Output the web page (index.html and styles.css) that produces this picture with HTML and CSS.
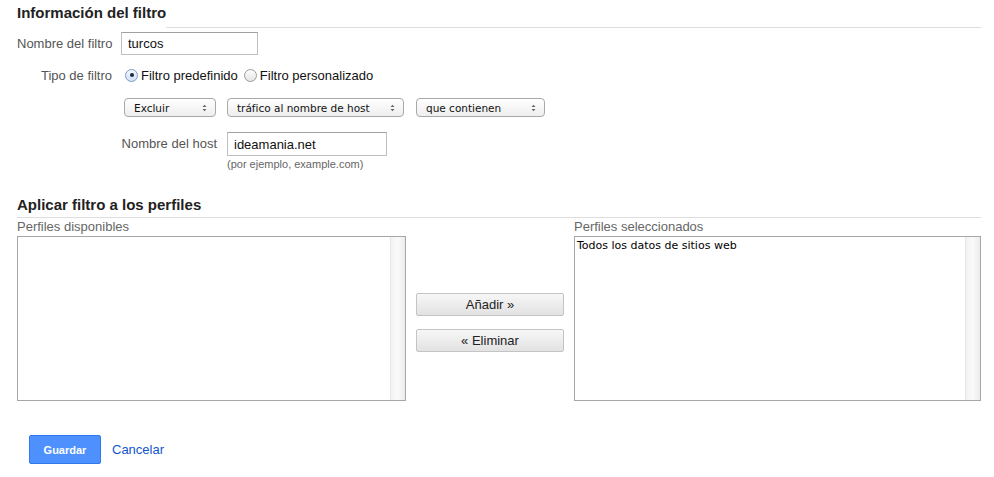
FILE: index.html
```html
<!DOCTYPE html>
<html lang="es">
<head>
<meta charset="utf-8">
<title>Filtro</title>
<link rel="stylesheet" href="styles.css">
</head>
<body>
<div class="page">
  <div class="head head-first"><h2>Información del filtro</h2><span class="head-line"></span></div>

  <div class="row row-name">
    <label class="label">Nombre del filtro</label>
    <div class="input input-name">turcos</div>
  </div>

  <div class="row row-type">
    <span class="label">Tipo de filtro</span>
    <span class="radio checked"></span><span class="radio-text">Filtro predefinido</span>
    <span class="radio"></span><span class="radio-text">Filtro personalizado</span>
  </div>

  <div class="row row-selects">
    <div class="select sel-1"><span>Excluir</span><svg class="arrows" width="5" height="8" viewBox="0 0 5 8"><path d="M0.5 3 L2.5 0.8 L4.5 3 Z M0.5 5 L2.5 7.2 L4.5 5 Z" fill="#666"/></svg></div>
    <div class="select sel-2"><span>tráfico al nombre de host</span><svg class="arrows" width="5" height="8" viewBox="0 0 5 8"><path d="M0.5 3 L2.5 0.8 L4.5 3 Z M0.5 5 L2.5 7.2 L4.5 5 Z" fill="#666"/></svg></div>
    <div class="select sel-3"><span>que contienen</span><svg class="arrows" width="5" height="8" viewBox="0 0 5 8"><path d="M0.5 3 L2.5 0.8 L4.5 3 Z M0.5 5 L2.5 7.2 L4.5 5 Z" fill="#666"/></svg></div>
  </div>

  <div class="row row-host">
    <span class="host-label">Nombre del host</span>
    <div class="host-field">
      <div class="input input-host">ideamania.net</div>
      <div class="hint">(por ejemplo, example.com)</div>
    </div>
  </div>

  <div class="head head-second"><h2>Aplicar filtro a los perfiles</h2></div>

  <div class="profiles">
    <div class="col col-left">
      <div class="col-title">Perfiles disponibles</div>
      <div class="listbox"><div class="list-items"></div><div class="scroll"></div></div>
    </div>
    <div class="col-mid">
      <button class="btn">Añadir »</button>
      <button class="btn">« Eliminar</button>
    </div>
    <div class="col col-right">
      <div class="col-title">Perfiles seleccionados</div>
      <div class="listbox"><div class="list-items"><div class="item">Todos los datos de sitios web</div></div><div class="scroll"></div></div>
    </div>
  </div>

  <div class="actions">
    <button class="btn-primary">Guardar</button>
    <a class="cancel" href="#">Cancelar</a>
  </div>
</div>
</body>
</html>
```

FILE: styles.css
```css
* { box-sizing: border-box; }
html, body { margin: 0; padding: 0; background: #fff; }
body { font-family: "Liberation Sans", Arial, sans-serif; font-size: 13px; color: #222; }

.page { width: 981px; padding: 0 0 0 17px; }

.head { display: flex; align-items: flex-end; }
.head h2 { margin: 0; font-size: 15px; font-weight: bold; color: #222; line-height: 18px; white-space: nowrap; }
.head-first { height: 28px; }
.head-first h2 { padding-bottom: 6px; }
.head-line { flex: 1; border-bottom: 1px solid #ddd; height: 1px; }
.head-second { margin-top: 27px; border-bottom: 1px solid #ddd; height: 20px; }
.head-second h2 { padding-bottom: 3px; }

.row { display: flex; align-items: center; white-space: nowrap; }
.label { width: 95px; text-align: right; margin-right: 9px; color: #555; flex: none; white-space: nowrap; }

.input { border: 1px solid #c0c0c0; border-top-color: #a0a0a0; background: #fff; color: #111; padding-left: 6px; display: flex; align-items: center; font-size: 13px; }
.row-name { margin-top: 4px; }
.input-name { width: 137px; height: 23px; }

.row-type { margin-top: 10px; height: 20px; }
.radio { width: 13px; height: 13px; border-radius: 50%; border: 1px solid #9a9a9a; background: linear-gradient(#fdfdfd, #e4e4e4); margin: 0 3px 0 4px; flex: none; position: relative; }
.radio.checked { border-color: #7a9cc8; background: linear-gradient(#f4f8fd, #cfe0f5); }
.radio.checked::after { content: ""; position: absolute; left: 3.5px; top: 3.5px; width: 4px; height: 4px; border-radius: 50%; background: #1d2a3a; }
.radio-text { color: #111; margin-right: 2px; }

.row-selects { margin-top: 13px; padding-left: 107px; gap: 11px; }
.select { height: 19px; border: 1px solid #a8a8a8; border-radius: 4px; background: linear-gradient(#ffffff, #eeeeee); display: flex; align-items: center; justify-content: space-between; padding: 0 8px 0 9px; font-family: "DejaVu Sans", sans-serif; font-size: 10.5px; color: #111; flex: none; }
.sel-1 { width: 92px; }
.sel-2 { width: 177px; }
.sel-3 { width: 129px; margin-left: 1px; }
.arrows { flex: none; }

.row-host { margin-top: 15px; align-items: flex-start; padding-left: 104px; }
.host-label { width: 96px; text-align: right; margin-right: 10px; color: #555; line-height: 24px; flex: none; }
.input-host { width: 160px; height: 24px; }
.hint { font-size: 11px; color: #666; margin-top: 2px; line-height: 13px; }

.profiles { display: flex; gap: 10px; }
.col-left { width: 389px; flex: none; }
.col-right { width: 407px; flex: none; }
.col-title { color: #666; font-size: 13px; line-height: 17px; height: 18px; }
.listbox { height: 165px; border: 1px solid #a6a6a6; display: flex; background: #fff; }
.list-items { flex: 1; padding: 2px 2px; }
.item { font-family: "DejaVu Sans", sans-serif; font-size: 11px; color: #000; line-height: 13px; }
.scroll { width: 15px; border-left: 1px solid #e6e6e6; background: linear-gradient(90deg, #f3f3f3, #fafafa 50%, #ececec); }

.col-mid { width: 148px; flex: none; display: flex; flex-direction: column; gap: 13px; padding-top: 75px; }
.btn { height: 23px; width: 148px; border: 1px solid #c4c4c4; border-radius: 2px; background: linear-gradient(#f7f7f7, #e2e2e2); font-family: "Liberation Sans", Arial, sans-serif; font-size: 13px; color: #222; padding: 0; }

.actions { display: flex; align-items: center; margin-top: 34px; padding-left: 12px; gap: 11px; }
.btn-primary { width: 72px; height: 29px; background: #4d90fe; border: 1px solid #3079ed; border-radius: 2px; color: #fff; font-weight: bold; font-size: 11px; font-family: "Liberation Sans", Arial, sans-serif; padding: 0; }
.cancel { color: #15c; text-decoration: none; font-size: 13px; }
```
